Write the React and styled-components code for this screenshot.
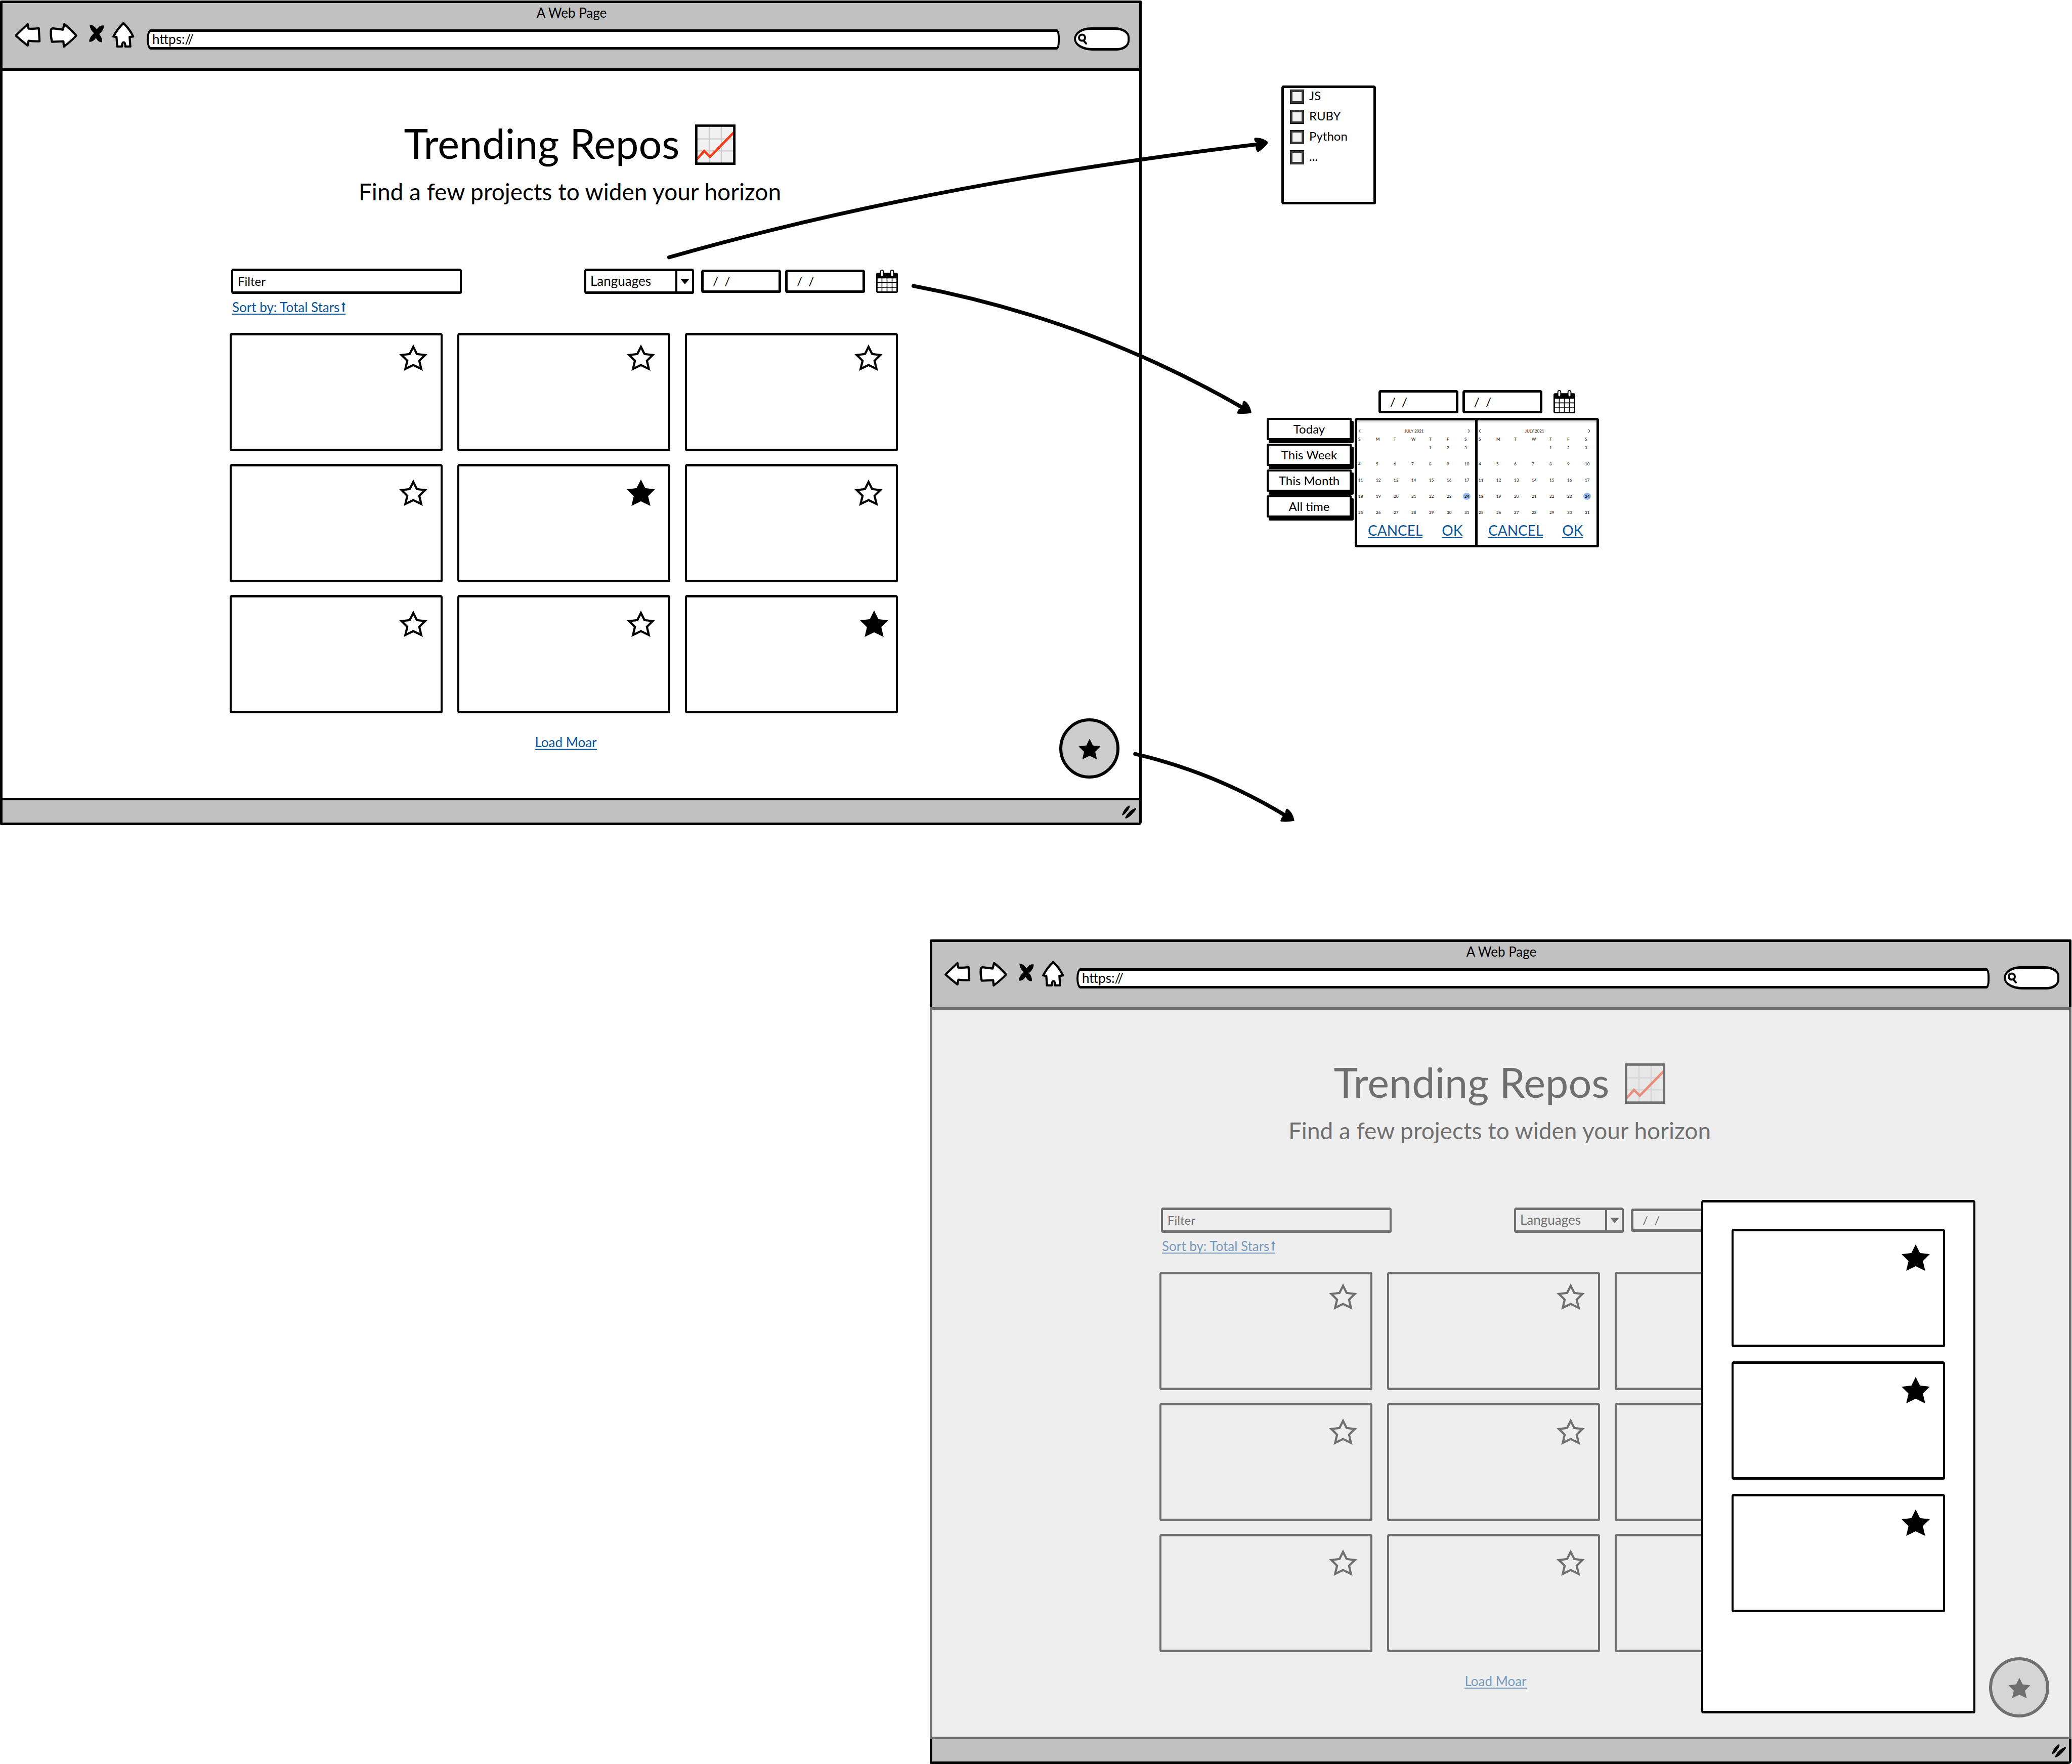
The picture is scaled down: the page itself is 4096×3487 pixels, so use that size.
import React, { useId } from "react";
import styled, { createGlobalStyle, css } from "styled-components";

const INK = "#000";
const LINK = "#08559b";

const GlobalStyle = createGlobalStyle`
  *, *::before, *::after { box-sizing: border-box; }
  body {
    margin: 0;
    background: #fff;
    color: ${INK};
    font-family: Lato, "Open Sans", sans-serif;
    font-size: 24px;
    line-height: 28px;
  }
  button, input, select { font: inherit; color: inherit; }
  svg { display: block; }
`;

const sketchBorder = css`
  border: 5px solid ${INK};
  border-left-width: 4px;
  border-right-width: 4px;
  border-radius: 4px 5px 4px 3px / 5px 4px 3px 5px;
`;

/* ---------- board ---------- */

const Board = styled.main`
  position: relative;
  width: 100%;
  padding-top: 1px;
  overflow: hidden;
`;

const BoardRow = styled.div`
  display: grid;
  grid-template-columns: ${(p) => (p.$end ? "1838fr 2257fr 1fr" : "2257fr 1839fr")};
  align-items: start;
  & + & { margin-top: 226px; }
`;

const Notes = styled.aside`
  display: flex;
  flex-direction: column;
  align-items: flex-start;
  gap: 367px;
  padding: 168px 0 0 247px;
`;

const ArrowLayer = styled.svg`
  position: absolute;
  top: 0;
  left: 0;
  width: 100%;
  height: auto;
  pointer-events: none;
`;

/* ---------- browser window ---------- */

const Window = styled.section`
  display: flex;
  flex-direction: column;
  border: 5px solid ${INK};
  border-radius: 2px 2px 6px 2px;
  background: #fff;
  ${(p) => p.$end && "grid-column: 2;"}
`;

const WindowHeader = styled.header`
  padding: 5px 19px 35px 22px;
  border-bottom: 5px solid ${INK};
  background: #c1c1c1;
`;

const WindowTitle = styled.div`
  text-align: center;
  margin-bottom: 4px;
  font-size: 26px;
`;

const NavBar = styled.div`
  display: flex;
  align-items: flex-end;
  gap: 10px;
`;

const NavButton = styled.button`
  flex: none;
  width: ${(p) => p.$width}px;
  height: 57px;
  padding: 0;
  border: 0;
  background: none;
  svg { width: 100%; height: 100%; }
`;

const UrlInput = styled.input`
  flex: 1;
  min-width: 0;
  height: 40px;
  margin: 0 18px 2px 11px;
  padding: 0 7px 2px;
  ${sketchBorder}
  border-radius: 8px 6px 6px 8px / 20px 16px 16px 20px;
  background: #fff;
  font-size: 26px;
`;

const SearchPill = styled.label`
  display: flex;
  align-items: center;
  width: 110px;
  height: 46px;
  padding-left: 3px;
  border: 5px solid ${INK};
  border-left-width: 4px;
  border-right-width: 4px;
  border-radius: 34px 30px 26px 38px / 24px 20px 20px 24px;
  background: #fff;
  svg { flex: none; width: 20px; height: 22px; }
`;

const SearchInput = styled.input`
  width: 60px;
  padding: 0;
  border: 0;
  outline: 0;
  background: none;
`;

const WindowBody = styled.div`
  position: relative;
  padding: 106px 0 95px;
`;

const WindowFooter = styled.footer`
  display: flex;
  justify-content: flex-end;
  height: 49px;
  padding: 9px 4px 0 0;
  border-top: 5px solid ${INK};
  background: #c1c1c1;
`;

/* ---------- page ---------- */

const Hero = styled.div`
  display: flex;
  flex-direction: column;
  align-items: center;
  gap: 26px;
  padding-right: 4px;
`;

const Title = styled.h1`
  display: flex;
  align-items: flex-start;
  gap: 31px;
  margin: 0;
  font-size: 81px;
  font-weight: 400;
  line-height: 74px;
  svg { width: 80px; height: 80px; }
`;

const Subtitle = styled.p`
  margin: 0;
  font-size: 46px;
  line-height: 54px;
`;

const Content = styled.div`
  margin-top: 125px;
  padding: 0 477px 0 449px;
`;

const Toolbar = styled.div`
  display: flex;
  align-items: center;
  padding-left: 3px;
`;

const FilterInput = styled.input`
  width: 456px;
  height: 50px;
  margin-right: auto;
  padding: 0 9px 2px;
  ${sketchBorder}
  background: transparent;
`;

const SelectBox = styled.div`
  display: flex;
  width: 217px;
  height: 50px;
  margin-right: 14px;
  ${sketchBorder}
`;

const Select = styled.select`
  flex: 1;
  min-width: 0;
  padding: 0 8px 2px;
  border: 0;
  appearance: none;
  background: transparent;
  font-size: 26px;
`;

const SelectArrow = styled.span`
  display: flex;
  align-items: center;
  justify-content: center;
  width: 33px;
  border-left: 4px solid ${INK};
  svg { width: 18px; height: 14px; }
`;

const DateGroup = styled.div`
  display: flex;
  align-items: center;
  gap: 8px;
`;

const DateInput = styled.input`
  width: 158px;
  height: 46px;
  padding: 0 18px 2px;
  ${sketchBorder}
  border-left-width: 5px;
  border-right-width: 5px;
  background: transparent;
  white-space: pre;
`;

const IconButton = styled.button`
  width: 43px;
  height: 46px;
  margin-left: 14px;
  padding: 0;
  border: 0;
  background: none;
  svg { width: 43px; height: 46px; }
`;

const TextLink = styled.a`
  display: inline-flex;
  align-items: center;
  gap: 4px;
  border-bottom: 2px solid ${LINK};
  color: ${LINK};
  font-size: ${(p) => (p.$large ? 28 : 26)}px;
  line-height: ${(p) => (p.$large ? 28 : 26)}px;
  text-decoration: none;
  svg { width: 8px; height: 20px; }
`;

const SortRow = styled.div`
  display: flex;
  padding: 13px 0 36px 5px;
`;

const CardGrid = styled.div`
  display: grid;
  grid-template-columns: repeat(3, 1fr);
  gap: 25px 29px;
`;

const Card = styled.article`
  display: flex;
  justify-content: flex-end;
  align-items: flex-start;
  height: 234px;
  padding-top: ${(p) => (p.$raised ? 16 : 24)}px;
  padding-right: ${(p) => (p.$edge ? 15 : 26)}px;
  ${sketchBorder}
`;

const StarButton = styled.button`
  padding: 0;
  border: 0;
  background: none;
  svg { width: 56px; height: 54px; }
`;

const LoadRow = styled.div`
  display: flex;
  justify-content: center;
  padding: 44px 0 0 8px;
`;

const FloatingButton = styled.button`
  position: absolute;
  right: 39px;
  bottom: 38px;
  display: flex;
  align-items: center;
  justify-content: center;
  width: 119px;
  height: 119px;
  padding: 0;
  border: 6px solid ${INK};
  border-radius: 50%;
  background: #ccc;
  svg { width: 44px; height: 42px; }
`;

const Scrim = styled.div`
  position: absolute;
  inset: -5px;
  background: rgba(221, 221, 221, 0.5);
`;

const Drawer = styled.div`
  position: absolute;
  right: 185px;
  bottom: 46px;
  display: flex;
  flex-direction: column;
  gap: 28px;
  width: 542px;
  min-height: 1015px;
  padding: 52px 56px;
  ${sketchBorder}
  background: #fff;
`;

/* ---------- notes ---------- */

const LanguageMenu = styled.fieldset`
  display: flex;
  flex-direction: column;
  gap: 12px;
  width: 187px;
  height: 235px;
  margin: 0 0 0 29px;
  padding: 3px 12px;
  ${sketchBorder}
  border-left-width: 5px;
  border-right-width: 5px;
`;

const CheckRow = styled.label`
  display: flex;
  align-items: flex-start;
  gap: 10px;
  height: 28px;
  line-height: 24px;
`;

const Checkbox = styled.input`
  appearance: none;
  width: 28px;
  height: 28px;
  margin: 0;
  border: 1px solid ${INK};
  background: #f2f2f2;
  box-shadow: inset 0 0 0 4px #363636;
`;

const DatePicker = styled.div`
  display: flex;
  flex-direction: column;
  gap: 9px;
`;

const PickerFields = styled.div`
  padding-left: 221px;
`;

const PickerMain = styled.div`
  display: flex;
  align-items: flex-start;
`;

const Presets = styled.div`
  display: flex;
  flex-direction: column;
  gap: 7px;
  margin-right: 6px;
`;

const PresetButton = styled.button`
  width: 168px;
  height: 44px;
  padding: 0;
  border: 4px solid ${INK};
  border-radius: 3px 2px 3px 2px;
  background: #fff;
  box-shadow: 4px 6px 0 ${INK};
`;

const CalendarPanel = styled.div`
  width: 245px;
  height: 256px;
  ${sketchBorder}
  border-left-width: 5px;
  border-right-width: 5px;
  background: #fff;
  & + & { margin-left: -7px; }
`;

const CalendarStrip = styled.div`
  height: 4px;
  background: #dcdcdc;
`;

const MonthBar = styled.div`
  display: flex;
  align-items: center;
  justify-content: space-between;
  height: 10px;
  margin: 12px 12px 3px 2px;
  font-size: 8px;
  line-height: 10px;
`;

const MonthButton = styled.button`
  padding: 0;
  border: 0;
  background: none;
  svg { width: 5px; height: 8px; }
`;

const DayTable = styled.table`
  width: 235px;
  table-layout: fixed;
  border-collapse: collapse;
  font-size: 8px;
  line-height: 8px;
  th, td {
    width: 35px;
    height: 32px;
    padding: 0 0 0 2px;
    font-weight: 400;
    text-align: left;
    vertical-align: bottom;
  }
  th:last-child { width: 25px; }
  th { height: 12px; }
  tbody tr:first-child td { height: 17px; }
`;

const Today = styled.span`
  display: inline-block;
  border-radius: 50%;
  background: #93bbf3;
  box-shadow: 0 0 0 3px #93bbf3;
  font-weight: 700;
`;

const PanelActions = styled.div`
  display: flex;
  gap: 38px;
  padding: 17px 0 0 21px;
`;

/* ---------- drawings ---------- */

const Star = ({ filled }) => (
  <svg viewBox="0 0 59 57" aria-hidden="true">
    <polygon
      points="29.5,7 37,22 54,24 42,36 46,53 29.5,45 13,53 17,36 5,24 22,22"
      fill={filled ? INK : "none"}
      stroke={INK}
      strokeWidth="4.5"
      strokeMiterlimit="6"
    />
  </svg>
);

const CalendarIcon = () => (
  <svg viewBox="0 0 45 48" aria-hidden="true">
    <rect x="1.5" y="8" width="42" height="38.5" rx="2" fill="#fff" stroke={INK} strokeWidth="3" />
    <rect x="1" y="8" width="43" height="10" fill={INK} />
    <path d="M12 17V46M22.5 17V46M33 17V46M2 26.5H43M2 36.5H43" stroke={INK} strokeWidth="1.6" />
    <rect x="9" y="1" width="6" height="13" rx="3" fill="#fff" stroke={INK} strokeWidth="2" />
    <rect x="30" y="1" width="6" height="13" rx="3" fill="#fff" stroke={INK} strokeWidth="2" />
  </svg>
);

const ChartIcon = () => (
  <svg viewBox="0 0 84 84" aria-hidden="true">
    <rect x="2.5" y="2.5" width="79" height="79" fill="#f1f1f1" />
    <path d="M29.5 3V81M54.5 3V81M3 30H81M3 55H81" stroke="#ccc" strokeWidth="2.5" />
    <path d="M4 72L19 55L31 67L81 16" fill="none" stroke="#f23a16" strokeWidth="5" />
    <rect x="2.5" y="2.5" width="79" height="79" fill="none" stroke={INK} strokeWidth="5" />
  </svg>
);

const navShape = { fill: "#fff", stroke: INK, strokeWidth: 4.5, strokeLinejoin: "round" };

function BrowserNav() {
  const id = useId();
  return (
    <NavBar>
      <NavButton $width={60} aria-label="Back">
        <svg viewBox="28.5 46 64 60.5">
          <path {...navShape} d="M33 75L58 51L60 60.5Q72 61 81.5 59.5L83 87Q72 87.5 60 86L58 96Q44 85 33 75Z" />
        </svg>
      </NavButton>
      <NavButton $width={66} aria-label="Forward">
        <svg viewBox="103 46 70 60.5">
          <path {...navShape} d="M107 64Q107 60 112 60L132 62.5L135 51Q149 62 160 75Q149 87 134 98L133 87L109 88Q106 76 107 64Z" />
        </svg>
      </NavButton>
      <NavButton $width={36} aria-label="Stop">
        <svg viewBox="183.5 46 38 60.5">
          <path
            fill={INK}
            d="M188 52Q196 52 203 62Q209 52 218 54Q218 64 208 72Q215 80 214 89Q206 90 201 80Q195 89 187 88Q186 80 197 70Q188 62 188 52Z"
          />
        </svg>
      </NavButton>
      <NavButton $width={50} aria-label="Home">
        <svg viewBox="232.5 46 53 60.5">
          <path
            {...navShape}
            d="M259 49Q272 61 279.5 77L272 78L273.5 98H263Q263 89 259.5 89Q256 89 256 98H246L244.5 78L238 77Q246 61 259 49Z"
          />
        </svg>
      </NavButton>
      <UrlInput aria-label="Address" defaultValue="https://" />
      <SearchPill htmlFor={id}>
        <svg viewBox="0 0 20 22" aria-hidden="true">
          <circle cx="9" cy="8.5" r="6" fill="none" stroke={INK} strokeWidth="4" />
          <path d="M12 14L17 20" stroke={INK} strokeWidth="4" strokeLinecap="round" />
        </svg>
        <SearchInput id={id} aria-label="Search" />
      </SearchPill>
    </NavBar>
  );
}

function DateFields() {
  return (
    <DateGroup>
      <DateInput aria-label="From date" defaultValue="/  /" />
      <DateInput aria-label="To date" defaultValue="/  /" />
      <IconButton aria-label="Open calendar">
        <CalendarIcon />
      </IconButton>
    </DateGroup>
  );
}

function RepoCard({ starred, raised, edge }) {
  return (
    <Card $raised={raised} $edge={edge}>
      <StarButton aria-label="Star repository" aria-pressed={starred}>
        <Star filled={starred} />
      </StarButton>
    </Card>
  );
}

const REPO_SLOTS = [0, 1, 2, 3, 4, 5, 6, 7, 8];

function BrowserWindow({ end, drawerOpen, starred = [] }) {
  return (
    <Window $end={end}>
      <WindowHeader>
        <WindowTitle>A Web Page</WindowTitle>
        <BrowserNav />
      </WindowHeader>
      <WindowBody>
        <Hero>
          <Title>
            Trending Repos
            <ChartIcon />
          </Title>
          <Subtitle>Find a few projects to widen your horizon</Subtitle>
        </Hero>
        <Content>
          <Toolbar>
            <FilterInput aria-label="Filter repositories" defaultValue="Filter" />
            <SelectBox>
              <Select aria-label="Languages">
                <option>Languages</option>
              </Select>
              <SelectArrow>
                <svg viewBox="0 0 18 14" aria-hidden="true">
                  <path d="M0 2H18L9 13Z" fill={INK} />
                </svg>
              </SelectArrow>
            </SelectBox>
            <DateFields />
          </Toolbar>
          <SortRow>
            <TextLink href="#sort">
              Sort by: Total Stars
              <svg viewBox="0 0 8 20" aria-hidden="true">
                <path d="M4 0L8 6H5.5V19H2.5V6H0Z" fill={LINK} />
              </svg>
            </TextLink>
          </SortRow>
          <CardGrid>
            {REPO_SLOTS.map((slot) => (
              <RepoCard
                key={slot}
                starred={starred.includes(slot)}
                raised={slot < 3}
                edge={slot === 8}
              />
            ))}
          </CardGrid>
          <LoadRow>
            <TextLink href="#more">Load Moar</TextLink>
          </LoadRow>
        </Content>
        <FloatingButton aria-label="Starred repositories">
          <Star filled />
        </FloatingButton>
        {drawerOpen && (
          <>
            <Scrim />
            <Drawer role="dialog" aria-label="Starred repositories">
              <RepoCard starred />
              <RepoCard starred />
              <RepoCard starred />
            </Drawer>
          </>
        )}
      </WindowBody>
      <WindowFooter>
        <svg width="32" height="28" viewBox="0 0 32 28" aria-hidden="true">
          <path d="M2 20Q5 8 16 1Q19 3 15 9Q9 18 3 21Z" fill={INK} />
          <path d="M8 26Q14 12 29 6Q32 8 25 15Q18 24 10 27Z" fill={INK} />
        </svg>
      </WindowFooter>
    </Window>
  );
}

const WEEKS = [
  ["", "", "", "", 1, 2, 3],
  [4, 5, 6, 7, 8, 9, 10],
  [11, 12, 13, 14, 15, 16, 17],
  [18, 19, 20, 21, 22, 23, 24],
  [25, 26, 27, 28, 29, 30, 31],
];

function Calendar() {
  return (
    <CalendarPanel>
      <CalendarStrip />
      <MonthBar>
        <MonthButton aria-label="Previous month">
          <svg viewBox="0 0 5 8">
            <path d="M4 0.5L1 4L4 7.5" fill="none" stroke={INK} />
          </svg>
        </MonthButton>
        <span>JULY 2021</span>
        <MonthButton aria-label="Next month">
          <svg viewBox="0 0 5 8">
            <path d="M1 0.5L4 4L1 7.5" fill="none" stroke={INK} />
          </svg>
        </MonthButton>
      </MonthBar>
      <DayTable>
        <thead>
          <tr>
            {["S", "M", "T", "W", "T", "F", "S"].map((d, i) => (
              <th key={i}>{d}</th>
            ))}
          </tr>
        </thead>
        <tbody>
          {WEEKS.map((week, w) => (
            <tr key={w}>
              {week.map((day, d) => (
                <td key={d}>{day === 24 ? <Today>24</Today> : day}</td>
              ))}
            </tr>
          ))}
        </tbody>
      </DayTable>
      <PanelActions>
        <TextLink $large href="#cancel">CANCEL</TextLink>
        <TextLink $large href="#ok">OK</TextLink>
      </PanelActions>
    </CalendarPanel>
  );
}

const Arrows = () => (
  <ArrowLayer viewBox="0 0 4348 3702" aria-hidden="true">
    <g fill="none" stroke={INK} strokeWidth="8" strokeLinecap="round">
      <path d="M1404 540Q1940 386 2645 302" />
      <path d="M1917 600Q2290 671 2612 858" />
      <path d="M2382 1582Q2550 1621 2702 1714" />
    </g>
    <g fill={INK} stroke={INK} strokeWidth="4" strokeLinejoin="round">
      <path d="M2659 299Q2648 290 2634 291Q2633 295 2639 298L2637 309Q2637 314 2640 317Q2652 309 2659 299Z" />
      <path d="M2624 865Q2621 850 2611 843Q2608 846 2610 856L2601 860L2598 866Q2611 867 2624 865Z" />
      <path d="M2714 1721Q2711 1706 2701 1699Q2698 1702 2700 1712L2692 1715L2689 1722Q2701 1723 2714 1721Z" />
    </g>
  </ArrowLayer>
);

export default function App() {
  return (
    <>
      <GlobalStyle />
      <Board>
        <BoardRow>
          <BrowserWindow starred={[4, 8]} />
          <Notes>
            <LanguageMenu aria-label="Languages">
              {["JS", "RUBY", "Python", "..."].map((name) => (
                <CheckRow key={name}>
                  <Checkbox type="checkbox" />
                  {name}
                </CheckRow>
              ))}
            </LanguageMenu>
            <DatePicker>
              <PickerFields>
                <DateFields />
              </PickerFields>
              <PickerMain>
                <Presets>
                  {["Today", "This Week", "This Month", "All time"].map((name) => (
                    <PresetButton key={name}>{name}</PresetButton>
                  ))}
                </Presets>
                <Calendar />
                <Calendar />
              </PickerMain>
            </DatePicker>
          </Notes>
        </BoardRow>
        <BoardRow $end>
          <BrowserWindow end drawerOpen />
        </BoardRow>
        <Arrows />
      </Board>
    </>
  );
}
